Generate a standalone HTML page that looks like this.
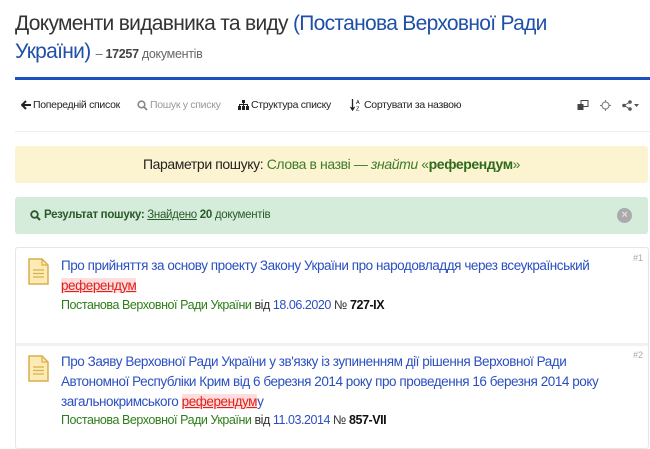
<!DOCTYPE html>
<html><head><meta charset="utf-8"><style>
body{margin:0;width:650px;height:445px;overflow:hidden;background:#fff;font-family:"Liberation Sans",sans-serif;color:#222}
h1{position:absolute;left:15px;top:10px;margin:0;font-weight:normal;font-size:21px;line-height:28px;letter-spacing:-0.7px;color:#333}
h1 .b{color:#1f4fa8}
h1 small{font-size:12.5px;color:#666;letter-spacing:-0.3px}
.bar{position:absolute;left:15px;top:77px;width:635px;height:3px;background:#1b4fc2}
.tb{position:absolute;top:99px;font-size:10.5px;letter-spacing:-0.3px;color:#222;white-space:nowrap;display:flex;align-items:center;gap:2px}
.tb svg{display:block}
.hr{position:absolute;left:15px;top:131px;width:635px;height:1px;background:#eee}
.y{position:absolute;left:15px;top:146px;width:633px;height:37px;background:#fcf3d0;border-radius:3px;text-align:center;line-height:37px;font-size:14px;letter-spacing:-0.4px;color:#222}
.g{position:absolute;left:15px;top:197px;width:633px;height:37px;background:#d4ecd9;border-radius:3px;line-height:37px;font-size:11.5px;letter-spacing:-0.3px;color:#2a5a2a}
.card{position:absolute;left:15px;top:247px;width:632px;height:200px;border:1px solid #e6e6e6;border-radius:3px}
.sep{position:absolute;left:16px;top:343px;width:632px;height:3px;background:#f2f2f2}
.t{position:absolute;left:61px;font-size:13.5px;line-height:20px;letter-spacing:-0.45px;color:#2a4fc0;white-space:nowrap}
.m{position:absolute;left:61px;font-size:12.5px;letter-spacing:-0.45px;color:#2e7d1a;white-space:nowrap}
.m .d{color:#2a4fc0}.m .k{color:#333}.m b{color:#111}
.hl{background:#fdd;color:#e0201a;text-decoration:underline}
.num{position:absolute;left:633px;font-size:9px;color:#aaa}
</style></head><body>
<h1>Документи видавника та виду <span class="b">(Постанова Верховної Ради<br>України)</span> <small>– <b style="color:#444">17257</b> документів</small></h1>
<div class="bar"></div>
<div class="tb" style="left:21px"><svg width="10" height="10" viewBox="0 0 10 10"><path d="M5 1L1 5l4 4M1 5h9" stroke="#222" stroke-width="2" fill="none"/></svg>Попередній список</div>
<div class="tb" style="left:137px;color:#999"><svg width="11" height="11" viewBox="0 0 11 11"><circle cx="4.5" cy="4.5" r="3.3" stroke="#888" stroke-width="1.6" fill="none"/><path d="M7 7l3 3" stroke="#888" stroke-width="1.8"/></svg>Пошук у списку</div>
<div class="tb" style="left:238px"><svg width="11" height="10" viewBox="0 0 11 10"><rect x="4" y="0" width="3" height="3" fill="#222"/><rect x="0" y="6" width="3" height="4" fill="#222"/><rect x="4" y="6" width="3" height="4" fill="#222"/><rect x="8" y="6" width="3" height="4" fill="#222"/><path d="M1.5 6V4.5h8V6M5.5 3v3" stroke="#222" fill="none"/></svg>Структура списку</div>
<div class="tb" style="left:350px"><svg width="12" height="12" viewBox="0 0 12 12"><path d="M2.5 0v10M0.5 8l2 3 2-3" stroke="#222" stroke-width="1.3" fill="none"/><text x="6" y="5" font-size="5.5" font-family="Liberation Sans">A</text><text x="6" y="11.5" font-size="5.5" font-family="Liberation Sans">Z</text></svg>Сортувати за назвою</div>
<svg style="position:absolute;left:577px;top:100px" width="12" height="11" viewBox="0 0 12 11"><rect x="4" y="0.5" width="7" height="6" fill="none" stroke="#444"/><rect x="0.5" y="4" width="6" height="6" fill="#444"/></svg>
<svg style="position:absolute;left:600px;top:100px" width="11" height="11" viewBox="0 0 11 11"><circle cx="5.5" cy="5.5" r="3.5" fill="none" stroke="#777"/><path d="M5.5 0v2M5.5 9v2M0 5.5h2M9 5.5h2" stroke="#777"/></svg>
<svg style="position:absolute;left:622px;top:100px" width="20" height="11" viewBox="0 0 20 11"><circle cx="2" cy="5.5" r="1.8" fill="#555"/><circle cx="8" cy="2" r="1.8" fill="#555"/><circle cx="8" cy="9" r="1.8" fill="#555"/><path d="M2 5.5L8 2M2 5.5L8 9" stroke="#555"/><path d="M12 4h5l-2.5 3z" fill="#555"/></svg>
<div class="hr"></div>
<div class="y">Параметри пошуку: <span style="color:#3c7d2a">Слова в назві — <i>знайти</i> «<b style="color:#2e6b1e">референдум</b>»</span></div>
<div class="g"><svg style="position:absolute;left:15px;top:13px" width="11" height="11" viewBox="0 0 11 11"><circle cx="4.5" cy="4.5" r="3.3" stroke="#2a5a2a" stroke-width="1.8" fill="none"/><path d="M7 7l3 3" stroke="#2a5a2a" stroke-width="2"/></svg><span style="margin-left:29px;font-weight:bold">Результат пошуку:</span> <u>Знайдено</u> <b>20</b> документів<span style="position:absolute;right:16px;top:11px;width:15px;height:15px;border-radius:50%;background:#aaa;color:#ddd;font-size:11px;line-height:15px;text-align:center;font-weight:bold">×</span></div>
<div class="card"></div>
<div class="sep"></div>
<svg style="position:absolute;left:28px;top:258px" width="21" height="27" viewBox="0 0 21 27"><path d="M1 1h13l6 6v19H1z" fill="#fcebb4" stroke="#d6b04e" stroke-width="1.5"/><path d="M14 1v6h6" fill="none" stroke="#d6b04e" stroke-width="1.2"/><path d="M5 12h11M5 15.5h11M5 19h11" stroke="#d6b04e" stroke-width="1.3"/></svg>
<div class="num" style="top:253px">#1</div>
<div class="t" style="top:256px">Про прийняття за основу проекту Закону України про народовладдя через всеукраїнський<br><span class="hl">референдум</span></div>
<div class="m" style="top:298px">Постанова Верховної Ради України <span class="k">від</span> <span class="d">18.06.2020</span> <span class="k">№</span> <b>727-IX</b></div>
<svg style="position:absolute;left:28px;top:355px" width="21" height="27" viewBox="0 0 21 27"><path d="M1 1h13l6 6v19H1z" fill="#fcebb4" stroke="#d6b04e" stroke-width="1.5"/><path d="M14 1v6h6" fill="none" stroke="#d6b04e" stroke-width="1.2"/><path d="M5 12h11M5 15.5h11M5 19h11" stroke="#d6b04e" stroke-width="1.3"/></svg>
<div class="num" style="top:350px">#2</div>
<div class="t" style="top:352px">Про Заяву Верховної Ради України у зв'язку із зупиненням дії рішення Верховної Ради<br>Автономної Республіки Крим від 6 березня 2014 року про проведення 16 березня 2014 року<br>загальнокримського <span class="hl">референдум</span>у</div>
<div class="m" style="top:413px">Постанова Верховної Ради України <span class="k">від</span> <span class="d">11.03.2014</span> <span class="k">№</span> <b>857-VII</b></div>
</body></html>
